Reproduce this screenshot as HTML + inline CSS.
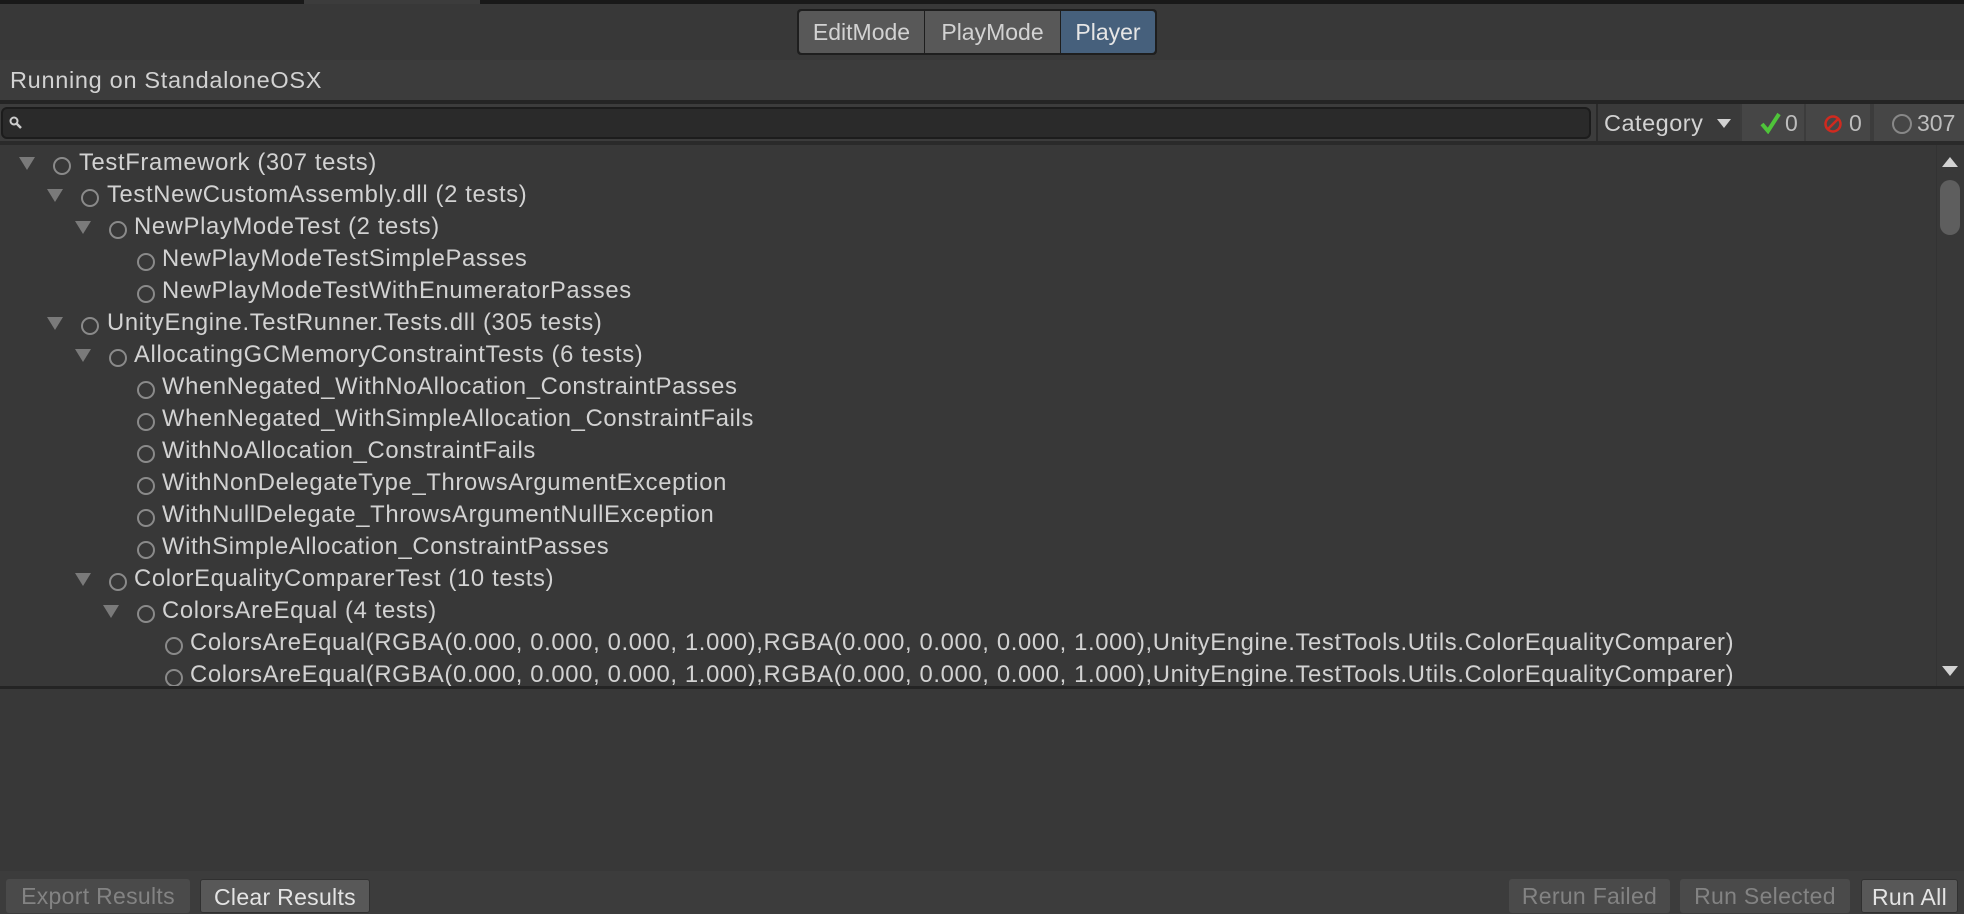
<!DOCTYPE html>
<html><head><meta charset="utf-8"><style>
*{margin:0;padding:0;box-sizing:border-box}
body{width:1964px;height:914px;background:#383838;font-family:"Liberation Sans",sans-serif;color:#d2d2d2;overflow:hidden;position:relative}
.a{position:absolute}
.row{position:absolute;height:32px;line-height:32px;font-size:23.8px;letter-spacing:0.65px;white-space:nowrap}
.tri{position:absolute;width:0;height:0;border-left:8px solid transparent;border-right:8px solid transparent;border-top:13px solid #7a7a7a;top:10px}
.cir{position:absolute;width:18px;height:18px;border:2px solid #8a8a8a;border-radius:50%;top:10px}
.btn{position:absolute;top:879px;height:34px;line-height:34px;font-size:23px;text-align:center;border-radius:3px;letter-spacing:0.3px}
</style></head><body>
<div class="a" style="left:0;top:0;width:1964px;height:4px;background:#191919"></div>
<div class="a" style="left:304px;top:0;width:176px;height:4px;background:#3c3c3c"></div>
<div class="a" style="left:797px;top:9px;width:360px;height:46px;background:#1e1e1e;border-radius:4px"></div>
<div class="a" style="left:799px;top:11px;width:125px;height:42px;background:#585858;border-radius:3px 0 0 3px;line-height:42px;text-align:center;font-size:23px">EditMode</div>
<div class="a" style="left:925px;top:11px;width:135px;height:42px;background:#585858;line-height:42px;text-align:center;font-size:23px">PlayMode</div>
<div class="a" style="left:1061px;top:11px;width:94px;height:42px;background:#46607c;border-radius:0 3px 3px 0;line-height:42px;text-align:center;font-size:23px;color:#e6e6e6">Player</div>
<div class="a" style="left:0;top:60px;width:1964px;height:41px;background:#3c3c3c"></div>
<div class="a" style="left:10px;top:60px;height:41px;line-height:41px;font-size:23.5px;letter-spacing:0.7px">Running on StandaloneOSX</div>
<div class="a" style="left:0;top:100px;width:1964px;height:4px;background:#242424"></div>
<div class="a" style="left:0;top:104px;width:1964px;height:38px;background:#3c3c3c"></div>
<div class="a" style="left:1px;top:107px;width:1590px;height:32px;background:#2a2a2a;border:2px solid #1c1c1c;border-radius:6px"></div>
<svg class="a" style="left:9px;top:116px" width="14" height="14"><circle cx="5" cy="5" r="3.5" stroke="#ccc" stroke-width="2" fill="none"/><line x1="7.5" y1="7.5" x2="12" y2="12" stroke="#ccc" stroke-width="2.5"/></svg>
<div class="a" style="left:1596px;top:104px;width:144px;height:38px;background:#3a3a3a;border-left:2px solid #2a2a2a"></div>
<div class="a" style="left:1604px;top:104px;height:38px;line-height:38px;font-size:23.5px;letter-spacing:0.5px">Category</div>
<div class="a" style="left:1717px;top:119px;width:0;height:0;border-left:7px solid transparent;border-right:7px solid transparent;border-top:9px solid #d2d2d2"></div>
<div class="a" style="left:1742px;top:104px;width:62px;height:38px;background:#464646"></div>
<svg class="a" style="left:1760px;top:112px" width="22" height="22"><path d="M2 12 L8 19 L19 2" stroke="#4fc43a" stroke-width="4" fill="none"/></svg>
<div class="a" style="left:1785px;top:104px;line-height:38px;font-size:23px;color:#bdbdbd">0</div>
<div class="a" style="left:1806px;top:104px;width:64px;height:38px;background:#464646"></div>
<svg class="a" style="left:1823px;top:114px" width="20" height="20"><circle cx="10" cy="10" r="7.5" stroke="#d02a1f" stroke-width="2.5" fill="none"/><line x1="5" y1="15" x2="15" y2="5" stroke="#d02a1f" stroke-width="2.5"/></svg>
<div class="a" style="left:1849px;top:104px;line-height:38px;font-size:23px;color:#bdbdbd">0</div>
<div class="a" style="left:1874px;top:104px;width:90px;height:38px;background:#464646"></div>
<div class="a" style="left:1892px;top:114px;width:20px;height:20px;border:2px solid #888;border-radius:50%"></div>
<div class="a" style="left:1917px;top:104px;line-height:38px;font-size:23px;color:#bdbdbd">307</div>
<div class="a" style="left:0;top:141px;width:1964px;height:4px;background:#2a2a2a"></div>
<div class="a" style="left:0;top:145px;width:1964px;height:541px;overflow:hidden">
<div class="row" style="top:2px"><div class="tri" style="left:19px"></div><div class="cir" style="left:53px"></div><span style="position:absolute;left:79px">TestFramework (307 tests)</span></div>
<div class="row" style="top:34px"><div class="tri" style="left:47px"></div><div class="cir" style="left:81px"></div><span style="position:absolute;left:107px">TestNewCustomAssembly.dll (2 tests)</span></div>
<div class="row" style="top:66px"><div class="tri" style="left:75px"></div><div class="cir" style="left:109px"></div><span style="position:absolute;left:134px">NewPlayModeTest (2 tests)</span></div>
<div class="row" style="top:98px"><div class="cir" style="left:137px"></div><span style="position:absolute;left:162px">NewPlayModeTestSimplePasses</span></div>
<div class="row" style="top:130px"><div class="cir" style="left:137px"></div><span style="position:absolute;left:162px">NewPlayModeTestWithEnumeratorPasses</span></div>
<div class="row" style="top:162px"><div class="tri" style="left:47px"></div><div class="cir" style="left:81px"></div><span style="position:absolute;left:107px">UnityEngine.TestRunner.Tests.dll (305 tests)</span></div>
<div class="row" style="top:194px"><div class="tri" style="left:75px"></div><div class="cir" style="left:109px"></div><span style="position:absolute;left:134px">AllocatingGCMemoryConstraintTests (6 tests)</span></div>
<div class="row" style="top:226px"><div class="cir" style="left:137px"></div><span style="position:absolute;left:162px">WhenNegated_WithNoAllocation_ConstraintPasses</span></div>
<div class="row" style="top:258px"><div class="cir" style="left:137px"></div><span style="position:absolute;left:162px">WhenNegated_WithSimpleAllocation_ConstraintFails</span></div>
<div class="row" style="top:290px"><div class="cir" style="left:137px"></div><span style="position:absolute;left:162px">WithNoAllocation_ConstraintFails</span></div>
<div class="row" style="top:322px"><div class="cir" style="left:137px"></div><span style="position:absolute;left:162px">WithNonDelegateType_ThrowsArgumentException</span></div>
<div class="row" style="top:354px"><div class="cir" style="left:137px"></div><span style="position:absolute;left:162px">WithNullDelegate_ThrowsArgumentNullException</span></div>
<div class="row" style="top:386px"><div class="cir" style="left:137px"></div><span style="position:absolute;left:162px">WithSimpleAllocation_ConstraintPasses</span></div>
<div class="row" style="top:418px"><div class="tri" style="left:75px"></div><div class="cir" style="left:109px"></div><span style="position:absolute;left:134px">ColorEqualityComparerTest (10 tests)</span></div>
<div class="row" style="top:450px"><div class="tri" style="left:103px"></div><div class="cir" style="left:137px"></div><span style="position:absolute;left:162px">ColorsAreEqual (4 tests)</span></div>
<div class="row" style="top:482px"><div class="cir" style="left:165px"></div><span style="position:absolute;left:190px">ColorsAreEqual(RGBA(0.000, 0.000, 0.000, 1.000),RGBA(0.000, 0.000, 0.000, 1.000),UnityEngine.TestTools.Utils.ColorEqualityComparer)</span></div>
<div class="row" style="top:514px"><div class="cir" style="left:165px"></div><span style="position:absolute;left:190px">ColorsAreEqual(RGBA(0.000, 0.000, 0.000, 1.000),RGBA(0.000, 0.000, 0.000, 1.000),UnityEngine.TestTools.Utils.ColorEqualityComparer)</span></div>
</div>
<div class="a" style="left:1936px;top:145px;width:28px;height:541px;background:#383838;border-left:1px solid #333"></div>
<div class="a" style="left:1942px;top:157px;width:0;height:0;border-left:8px solid transparent;border-right:8px solid transparent;border-bottom:10px solid #d2d2d2"></div>
<div class="a" style="left:1940px;top:180px;width:20px;height:55px;background:#5e5e5e;border-radius:10px"></div>
<div class="a" style="left:1942px;top:666px;width:0;height:0;border-left:8px solid transparent;border-right:8px solid transparent;border-top:10px solid #d2d2d2"></div>
<div class="a" style="left:0;top:686px;width:1964px;height:3px;background:#242424"></div>
<div class="a" style="left:0;top:871px;width:1964px;height:43px;background:#3c3c3c"></div>
<div class="btn" style="left:6px;width:184px;background:#4a4a4a;color:#838383">Export Results</div>
<div class="btn" style="left:200px;width:170px;background:#585858;color:#e4e4e4;border:1px solid #303030">Clear Results</div>
<div class="btn" style="left:1509px;width:161px;background:#4a4a4a;color:#838383">Rerun Failed</div>
<div class="btn" style="left:1680px;width:170px;background:#4a4a4a;color:#838383">Run Selected</div>
<div class="btn" style="left:1861px;width:97px;background:#585858;color:#e4e4e4;border:1px solid #303030">Run All</div>
</body></html>
